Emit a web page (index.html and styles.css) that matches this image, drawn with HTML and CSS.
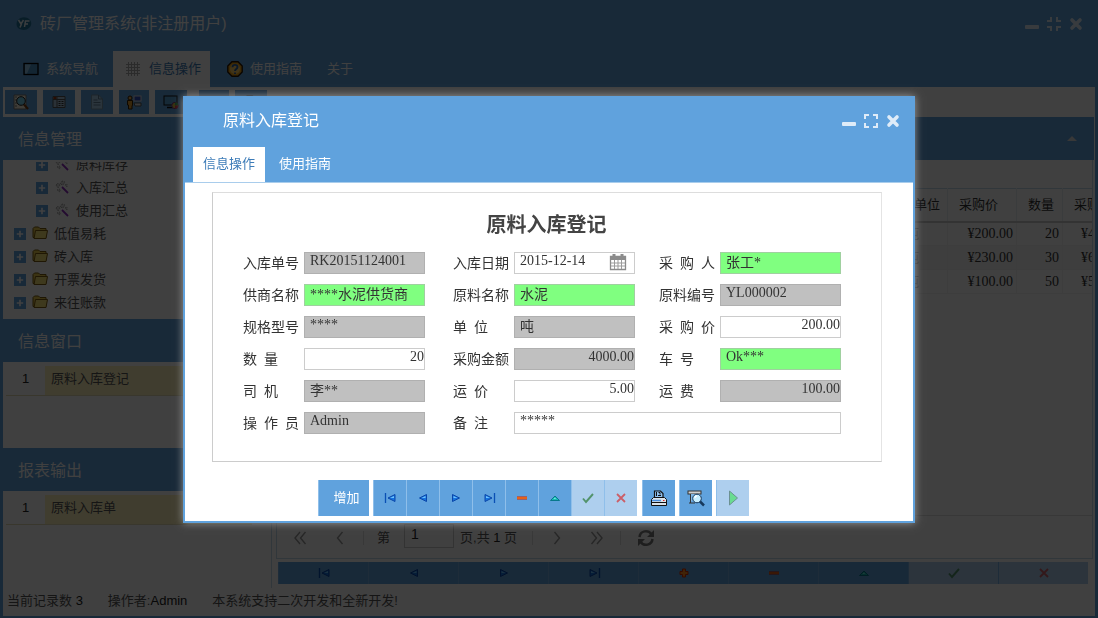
FILE: index.html
```html
<!DOCTYPE html>
<html lang="zh-CN">
<head>
    <meta charset="UTF-8">
    <title>砖厂管理系统</title>
    <meta name="viewport" content="width=device-width,initial-scale=1">
    <link rel="stylesheet" href="styles.css">
</head>
<body>

<svg class="defs" width="0" height="0">
    <symbol id="i-min" viewBox="0 0 16 16"><rect x="1" y="9" width="14" height="4" rx="1" fill="currentColor"/></symbol>
    <symbol id="i-max" viewBox="0 0 16 16"><path d="M1 6V1h5v2H3v3zM10 1h5v5h-2V3h-3zM1 10h2v3h3v2H1zM13 10h2v5h-5v-2h3z" fill="currentColor"/></symbol>
    <symbol id="i-restore" viewBox="0 0 16 16"><path d="M4 1h2v5H1V4h3zM10 1h2v3h3v2h-5zM1 10h5v5H4v-3H1zM10 10h5v2h-3v3h-2z" fill="currentColor"/></symbol>
    <symbol id="i-close" viewBox="0 0 16 16"><path d="M4 4l8 8M12 4l-8 8" stroke="currentColor" stroke-width="3.600" stroke-linecap="round"/></symbol>
    <symbol id="i-first" viewBox="0 0 16 16"><path d="M3.500 3v10" stroke="#0a50b4" stroke-width="1.300"/><path d="M13 4.500v7L6 8z" fill="#1673e0" stroke="#0a46a8"/><path d="M12 6L8 8h4z" fill="#6cc3ff"/></symbol>
    <symbol id="i-prev" viewBox="0 0 16 16"><path d="M11.500 4.500v7L4.500 8z" fill="#1673e0" stroke="#0a46a8"/><path d="M10.500 6l-4 2h4z" fill="#6cc3ff"/></symbol>
    <symbol id="i-next" viewBox="0 0 16 16"><path d="M4.500 4.500v7L11.500 8z" fill="#1673e0" stroke="#0a46a8"/><path d="M5.500 6l4 2h-4z" fill="#6cc3ff"/></symbol>
    <symbol id="i-last" viewBox="0 0 16 16"><path d="M13.500 3v10" stroke="#0a50b4" stroke-width="1.300"/><path d="M4 4.500v7L11 8z" fill="#1673e0" stroke="#0a46a8"/><path d="M5 6l4 2H5z" fill="#6cc3ff"/></symbol>
    <symbol id="i-plus" viewBox="0 0 16 16"><path d="M6.500 4h3v2.500H12v3H9.500V12h-3V9.500H4v-3h2.500z" fill="#ff8a1e" stroke="#d02c00"/></symbol>
    <symbol id="i-minus" viewBox="0 0 16 16"><rect x="3" y="6.500" width="10" height="3" fill="#cc2200"/><rect x="3" y="7.500" width="10" height="1" fill="#ffa030"/></symbol>
    <symbol id="i-up" viewBox="0 0 16 16"><path d="M3.500 10.500L8 6l4.500 4.500z" fill="#19b9b4" stroke="#08788c"/><path d="M6.500 9L8 7.500 9 9z" fill="#7df0e4"/></symbol>
    <symbol id="i-ok" viewBox="0 0 16 16"><path d="M3 8.500l3 3.500 7-8" fill="none" stroke="#2c7a35" stroke-width="1.900"/></symbol>
    <symbol id="i-no" viewBox="0 0 16 16"><path d="M4 4l8 8M12 4l-8 8" stroke="#d83030" stroke-width="1.800"/></symbol>
    <symbol id="i-print" viewBox="0 0 18 18"><path d="M4.500 9V2h6L13 4.500V9" fill="#8fc0ee" stroke="#111" stroke-width="1.200"/><path d="M6.500 3v4M8.500 3.500H10v2M11 6.500H8" stroke="#111" fill="none"/><path d="M1.500 10.500l2-2h11l2 2v6h-15z" fill="#dbe3ea" stroke="#111"/><path d="M2 13.500h14" stroke="#111"/><path d="M2 11.500h9" stroke="#4a90e0" stroke-width="1.500"/><path d="M13 11.500h1.500" stroke="#e02020"/></symbol>
    <symbol id="i-preview" viewBox="0 0 18 18"><rect x="1" y="2" width="13" height="3" fill="#cfcfcf" stroke="#333"/><path d="M3.500 5v9M2 14h6" stroke="#333" fill="none"/><rect x="4" y="5" width="9" height="7" fill="#7fb6e6"/><circle cx="10" cy="9.500" r="4.300" fill="#c8eeff" stroke="#16385c"/><path d="M13 12.500l4 4" stroke="#16385c" stroke-width="2.500"/><path d="M8 9c0-2 1-2 2-2" stroke="#fff" fill="none" stroke-width="1.300"/></symbol>
    <symbol id="i-play" viewBox="0 0 16 16"><path d="M4.500 1v14l8-7z" fill="#4de26a" stroke="#50776a"/></symbol>
    <symbol id="i-cal" viewBox="0 0 18 18"><path d="M1.500 3.500h15v13h-15z" fill="#fff" stroke="#8b8b8b" stroke-width="1.300"/><path d="M1 3h16v4H1zM3.500 1h3v3h-3zM11.500 1h3v3h-3z" fill="#8b8b8b"/><path d="M5.500 7v9M9 7v9M12.500 7v9M2 10h14M2 13h14" stroke="#9b9b9b"/></symbol>
    <symbol id="i-screen" viewBox="0 0 16 16"><rect x="1" y="2.500" width="14" height="11" fill="#4d92c8" stroke="#000" stroke-width="1.300"/><path d="M2 3.500h6L4 12.500H2z" fill="#93c8ea"/></symbol>
    <symbol id="i-grid" viewBox="0 0 16 16"><path d="M3.500 1v14M6.500 1v14M9.500 1v14M12.500 1v14M1 3.500h14M1 6.500h14M1 9.500h14M1 12.500h14" stroke="#aaa"/></symbol>
    <symbol id="i-help" viewBox="0 0 16 16"><path d="M5 .800h6L15.200 5v6L11 15.200H5L.800 11V5z" fill="#f0a417" stroke="#2a1600" stroke-width="1.400"/><circle cx="8" cy="8" r="5" fill="#ffd064"/><path d="M5.500 6.300c0-3.300 5-3 5-.300C10.500 8 8 7.800 8 10M8 11.500v1.500" fill="none" stroke="#2b61a0" stroke-width="1.900"/></symbol>
    <symbol id="i-search" viewBox="0 0 16 16"><path d="M1 1h12v14H1z" fill="#f5efdc" stroke="#777"/><path d="M2 3h2M2 6h2M2 9h2M2 12h2" stroke="#777"/><circle cx="8" cy="7" r="4.300" fill="#79d1ee" stroke="#222"/><path d="M11 10.500l4 4.500" stroke="#7a3c10" stroke-width="2.200"/></symbol>
    <symbol id="i-list" viewBox="0 0 16 16"><path d="M2 2.500h12v11H2z" fill="#a9c4dc" stroke="#555"/><path d="M2.500 4h3" stroke="#a33510" stroke-width="2"/><path d="M6 2v12M2 5.500h12" stroke="#555"/><path d="M7.500 7.500h5M7.500 9.500h5M7.500 11.500h5" stroke="#333" stroke-dasharray="2 1"/></symbol>
    <symbol id="i-doc" viewBox="0 0 16 16"><path d="M2.500 1h7l4 4v10h-11z" fill="#a9cdea" stroke="#7896aa"/><path d="M9.500 1v4h4M4.500 6h4M4.500 8.500h7M4.500 11h7" fill="none" stroke="#5f8099"/></symbol>
    <symbol id="i-user" viewBox="0 0 16 16"><rect x="8" y="2" width="7" height="5" fill="#304fc0" stroke="#ddd"/><path d="M8 9h7v3H9z" fill="#ddd" stroke="#555"/><circle cx="4" cy="4" r="2" fill="#e2ac55" stroke="#3b2000"/><path d="M1.500 6.500h5v5H6V15H2.500v-4h-1z" fill="#e09a30" stroke="#3b2000"/></symbol>
    <symbol id="i-monitor" viewBox="0 0 16 16"><rect x="1" y="2" width="13" height="9" fill="#5aa3d8" stroke="#111"/><path d="M4 13.500h6" stroke="#111" stroke-width="1.500"/><circle cx="12" cy="11.500" r="3.200" fill="#d6c13c" stroke="#7d2e85"/><path d="M12 11.500V8.300a3.200 3.200 0 0 1 3.200 3.200z" fill="#3eaa4c"/><path d="M12 11.500h3.200a3.200 3.200 0 0 1-3.200 3.200z" fill="#cf3348"/></symbol>
    <symbol id="i-folder" viewBox="0 0 16 16"><path d="M1 11.500V2.500L2.500 1h4L8 2.500h6v9z" fill="#ebc94c" stroke="#7b5c10"/><path d="M3.500 4.500h12l-1.500 8H2z" fill="#f8e174" stroke="#7b5c10"/></symbol>
    <symbol id="i-expand" viewBox="0 0 13 13"><path d="M0 0h13v13H0z" fill="#60a2dd"/><path d="M6.500 3v7M3 6.500h7" stroke="#fff" stroke-width="1.800"/></symbol>
    <symbol id="i-wand" viewBox="0 0 16 16"><path d="M8 7l6 6" stroke="#8d2ebd" stroke-width="1.800"/><path d="M2 5l2-2 2 2-2 3zM8 1l3 1-2 3-3-1zM3 10l3-1v3zM11 5l2-1v3z" fill="#ddd" stroke="#999" stroke-dasharray="1 1"/></symbol>
    <symbol id="i-refresh" viewBox="0 0 18 18"><path d="M2.500 8a6.500 6.500 0 0 1 11.800-3M15.500 10a6.500 6.500 0 0 1-11.800 3" fill="none" stroke="#777" stroke-width="2.500"/><path d="M17 1v7h-7zM1 17v-7h7z" fill="#777"/></symbol>
    <symbol id="i-left" viewBox="0 0 16 16"><path d="M10.500 2l-5 6 5 6" fill="none" stroke="#999" stroke-width="1.400"/></symbol>
    <symbol id="i-left2" viewBox="0 0 16 16"><path d="M8 2L3 8l5 6M13.500 2l-5 6 5 6" fill="none" stroke="#999" stroke-width="1.400"/></symbol>
    <symbol id="i-right" viewBox="0 0 16 16"><path d="M5.500 2l5 6-5 6" fill="none" stroke="#999" stroke-width="1.400"/></symbol>
    <symbol id="i-right2" viewBox="0 0 16 16"><path d="M2.500 2l5 6-5 6M8 2l5 6-5 6" fill="none" stroke="#999" stroke-width="1.400"/></symbol>
    <symbol id="i-logo" viewBox="0 0 16 16"><path d="M2 4c3-4 9-3 11-1 3 2 3 7 0 9-3 3-9 2-11 0C0 10 0 6 2 4z" fill="#22759c"/><path d="M2.500 4L5 8l2.500-4M5.500 8L4 11.500M13.500 5H9.500L8.500 11M9 8h3" fill="none" stroke="#e8f2f8" stroke-width="1.500"/></symbol>
</svg>

<div class="window">
    <div class="win_head">
        <div class="win_title">
            <svg class="ico"><use href="#i-logo"/></svg>
            <span>砖厂管理系统(非注册用户)</span>
            <div class="win_tools">
                <button type="button" aria-label="最小化"><svg class="ico"><use href="#i-min"/></svg></button>
                <button type="button" aria-label="还原"><svg class="ico"><use href="#i-restore"/></svg></button>
                <button type="button" aria-label="关闭"><svg class="ico"><use href="#i-close"/></svg></button>
            </div>
        </div>
        <div class="main_tabs">
            <button type="button"><svg class="ico"><use href="#i-screen"/></svg>系统导航</button>
            <button type="button" class="active"><svg class="ico"><use href="#i-grid"/></svg>信息操作</button>
            <button type="button"><svg class="ico"><use href="#i-help"/></svg>使用指南</button>
            <button type="button">关于</button>
        </div>
    </div>

    <div class="toolbar">
        <button type="button" aria-label="查询"><svg class="ico"><use href="#i-search"/></svg></button>
        <button type="button" aria-label="列表"><svg class="ico"><use href="#i-list"/></svg></button>
        <button type="button" aria-label="单据"><svg class="ico"><use href="#i-doc"/></svg></button>
        <button type="button" class="narrow" aria-label="用户"><svg class="ico"><use href="#i-user"/></svg></button>
        <button type="button" aria-label="图表"><svg class="ico"><use href="#i-monitor"/></svg></button>
        <button type="button" class="narrow split" aria-label="更多"></button>
        <button type="button" aria-label="打印"><svg class="ico"><use href="#i-print"/></svg></button>
    </div>

    <div class="main">
        <div class="side">
            <div class="panel panel_tree">
                <h2 class="panel_head">信息管理</h2>
                <ul class="tree">
                    <li class="sub"><svg class="exp"><use href="#i-expand"/></svg><svg class="ico"><use href="#i-wand"/></svg>原料库存</li>
                    <li class="sub"><svg class="exp"><use href="#i-expand"/></svg><svg class="ico"><use href="#i-wand"/></svg>入库汇总</li>
                    <li class="sub"><svg class="exp"><use href="#i-expand"/></svg><svg class="ico"><use href="#i-wand"/></svg>使用汇总</li>
                    <li><svg class="exp"><use href="#i-expand"/></svg><svg class="ico"><use href="#i-folder"/></svg>低值易耗</li>
                    <li><svg class="exp"><use href="#i-expand"/></svg><svg class="ico"><use href="#i-folder"/></svg>砖入库</li>
                    <li><svg class="exp"><use href="#i-expand"/></svg><svg class="ico"><use href="#i-folder"/></svg>开票发货</li>
                    <li><svg class="exp"><use href="#i-expand"/></svg><svg class="ico"><use href="#i-folder"/></svg>来往账款</li>
                </ul>
            </div>
            <div class="panel panel_info">
                <h2 class="panel_head">信息窗口</h2>
                <div class="row"><span class="no">1</span><span class="name">原料入库登记</span></div>
            </div>
            <div class="panel">
                <h2 class="panel_head">报表输出</h2>
                <div class="row"><span class="no">1</span><span class="name">原料入库单</span></div>
            </div>
        </div>

        <div class="content">
            <div class="content_head"><i class="caret"></i></div>
            <div class="grid">
                <table>
                    <colgroup><col class="c_rest"><col class="c_unit"><col class="c_price"><col class="c_num"><col class="c_sum"></colgroup>
                    <thead>
                        <tr><th></th><th>单位</th><th>采购价</th><th>数量</th><th>采购金额</th></tr>
                    </thead>
                    <tbody>
                        <tr><td></td><td class="unit">吨</td><td>¥200.00</td><td>20</td><td class="sum">¥4000.00</td></tr>
                        <tr><td></td><td class="unit">吨</td><td>¥230.00</td><td>30</td><td class="sum">¥6900.00</td></tr>
                        <tr><td></td><td class="unit">吨</td><td>¥100.00</td><td>50</td><td class="sum">¥5000.00</td></tr>
                    </tbody>
                </table>
            </div>
            <div class="pager">
                <button type="button" aria-label="首页"><svg class="ico"><use href="#i-left2"/></svg></button>
                <button type="button" aria-label="上页"><svg class="ico"><use href="#i-left"/></svg></button>
                <i class="sep"></i>
                <label for="page">第</label>
                <input id="page" type="text" value="1">
                <span>页,共 <b>1</b> 页</span>
                <i class="sep"></i>
                <button type="button" aria-label="下页"><svg class="ico"><use href="#i-right"/></svg></button>
                <button type="button" aria-label="末页"><svg class="ico"><use href="#i-right2"/></svg></button>
                <i class="sep"></i>
                <button type="button" aria-label="刷新"><svg class="ico big"><use href="#i-refresh"/></svg></button>
            </div>
            <div class="navbar">
                <button type="button" aria-label="第一条"><svg class="ico"><use href="#i-first"/></svg></button>
                <button type="button" aria-label="上一条"><svg class="ico"><use href="#i-prev"/></svg></button>
                <button type="button" aria-label="下一条"><svg class="ico"><use href="#i-next"/></svg></button>
                <button type="button" aria-label="最后一条"><svg class="ico"><use href="#i-last"/></svg></button>
                <button type="button" aria-label="添加"><svg class="ico"><use href="#i-plus"/></svg></button>
                <button type="button" aria-label="删除"><svg class="ico"><use href="#i-minus"/></svg></button>
                <button type="button" aria-label="编辑"><svg class="ico"><use href="#i-up"/></svg></button>
                <button type="button" aria-label="保存" disabled><svg class="ico"><use href="#i-ok"/></svg></button>
                <button type="button" aria-label="取消" disabled><svg class="ico"><use href="#i-no"/></svg></button>
            </div>
        </div>
    </div>

    <div class="status">
        <span>当前记录数 <b>3</b></span>
        <span>操作者:<b>Admin</b></span>
        <span>本系统支持二次开发和全新开发!</span>
    </div>
</div>

<div class="mask">
    <div class="dialog" role="dialog" aria-labelledby="dlg_title">
        <div class="dlg_head">
            <div class="dlg_title">
                <span id="dlg_title">原料入库登记</span>
                <div class="win_tools">
                    <button type="button" aria-label="最小化"><svg class="ico"><use href="#i-min"/></svg></button>
                    <button type="button" aria-label="最大化"><svg class="ico"><use href="#i-max"/></svg></button>
                    <button type="button" aria-label="关闭"><svg class="ico"><use href="#i-close"/></svg></button>
                </div>
            </div>
            <div class="dlg_tabs">
                <button type="button" class="active">信息操作</button>
                <button type="button">使用指南</button>
            </div>
        </div>
        <div class="dlg_body">
            <form class="sheet">
                <h1>原料入库登记</h1>
                <div class="fields">
                    <div class="field"><label for="f1">入库单号</label><input id="f1" class="gray" type="text" value="RK20151124001" readonly></div>
                    <div class="field date"><label for="f2">入库日期</label><input id="f2" type="text" value="2015-12-14"><svg class="cal"><use href="#i-cal"/></svg></div>
                    <div class="field"><label for="f3">采&ensp;购&ensp;人</label><input id="f3" class="green" type="text" value="张工*"></div>

                    <div class="field"><label for="f4">供商名称</label><input id="f4" class="green" type="text" value="****水泥供货商"></div>
                    <div class="field"><label for="f5">原料名称</label><input id="f5" class="green" type="text" value="水泥"></div>
                    <div class="field"><label for="f6">原料编号</label><input id="f6" class="gray" type="text" value="YL000002" readonly></div>

                    <div class="field"><label for="f7">规格型号</label><input id="f7" class="gray" type="text" value="****" readonly></div>
                    <div class="field"><label for="f8">单&ensp;位</label><input id="f8" class="gray" type="text" value="吨" readonly></div>
                    <div class="field"><label for="f9">采&ensp;购&ensp;价</label><input id="f9" class="num" type="text" value="200.00"></div>

                    <div class="field"><label for="f10">数&ensp;量</label><input id="f10" class="num" type="text" value="20"></div>
                    <div class="field"><label for="f11">采购金额</label><input id="f11" class="num gray" type="text" value="4000.00" readonly></div>
                    <div class="field"><label for="f12">车&ensp;号</label><input id="f12" class="green" type="text" value="Ok***"></div>

                    <div class="field"><label for="f13">司&ensp;机</label><input id="f13" class="gray" type="text" value="李**" readonly></div>
                    <div class="field"><label for="f14">运&ensp;价</label><input id="f14" class="num" type="text" value="5.00"></div>
                    <div class="field"><label for="f15">运&ensp;费</label><input id="f15" class="num gray" type="text" value="100.00" readonly></div>

                    <div class="field"><label for="f16">操&ensp;作&ensp;员</label><input id="f16" class="gray" type="text" value="Admin" readonly></div>
                    <div class="field wide"><label for="f17">备&ensp;注</label><input id="f17" type="text" value="*****"></div>
                </div>
            </form>
            <div class="actions">
                <button type="button" class="add">增加</button>
                <div class="group">
                    <button type="button" aria-label="第一条"><svg class="ico"><use href="#i-first"/></svg></button>
                    <button type="button" aria-label="上一条"><svg class="ico"><use href="#i-prev"/></svg></button>
                    <button type="button" aria-label="下一条"><svg class="ico"><use href="#i-next"/></svg></button>
                    <button type="button" aria-label="最后一条"><svg class="ico"><use href="#i-last"/></svg></button>
                    <button type="button" aria-label="删除"><svg class="ico"><use href="#i-minus"/></svg></button>
                    <button type="button" aria-label="编辑"><svg class="ico"><use href="#i-up"/></svg></button>
                    <button type="button" aria-label="保存" disabled><svg class="ico"><use href="#i-ok"/></svg></button>
                    <button type="button" aria-label="取消" disabled><svg class="ico"><use href="#i-no"/></svg></button>
                </div>
                <button type="button" aria-label="打印"><svg class="ico big"><use href="#i-print"/></svg></button>
                <button type="button" aria-label="预览"><svg class="ico big"><use href="#i-preview"/></svg></button>
                <button type="button" aria-label="执行" disabled><svg class="ico"><use href="#i-play"/></svg></button>
            </div>
        </div>
    </div>
</div>

</body>
</html>
```
FILE: styles.css
```css
*{
    box-sizing:border-box;
}
body{
    margin:0;
    font:13px/20px "Liberation Sans","Noto Sans CJK SC",sans-serif;
    color:#555;
    background:#fff;
}
button{
    margin:0;
    padding:0;
    border:0;
    background:none;
    font:inherit;
    color:inherit;
    display:flex;
    align-items:center;
    justify-content:center;
}
h1,h2,ul{
    margin:0;
    padding:0;
    list-style:none;
}
b{
    font-weight:normal;
    color:#222;
}
.defs{
    position:absolute;
}
.ico{
    width:16px;
    height:16px;
    flex:none;
}
.ico.big{
    width:18px;
    height:18px;
}

/* main window */
.window{
    height:100vh;
    display:flex;
    flex-direction:column;
    border:3px solid #60a2dd;
    border-top:0;
    border-bottom-width:2px;
    overflow:hidden;
}
.win_head{
    background:#60a2dd;
    color:#fff;
    height:87px;
    flex:none;
    display:flex;
    flex-direction:column;
    justify-content:space-between;
}
.win_title{
    display:flex;
    align-items:center;
    height:48px;
    padding:0 11px 0 13px;
    gap:8px;
    font-size:16px;
}
.win_tools{
    display:flex;
    gap:6px;
    margin-left:auto;
    opacity:.8;
}
.main_tabs{
    display:flex;
    height:36px;
    padding-left:10px;
}
.main_tabs button{
    padding:0 8px 0 10px;
    gap:7px;
}
.main_tabs button+button{
    margin-left:7px;
}
.main_tabs .active{
    background:#fff;
    color:#3d7cb8;
    padding:0 9px 0 12px;
    gap:8px;
}
.toolbar{
    display:flex;
    gap:6px;
    height:30px;
    flex:none;
    padding:3px 2px;
}
.toolbar button{
    width:32px;
    height:24px;
    background:#60a2dd;
}
.toolbar .narrow{
    width:30px;
}
.toolbar .split{
    margin-left:6px;
}
.main{
    flex:1;
    min-height:0;
    display:flex;
    gap:4px;
}
.side{
    width:269px;
    flex:none;
    border-right:1px solid #c3d9ec;
}
.panel_head,.content_head{
    height:43px;
    background:#60a2dd;
    color:#fff;
    font-size:16px;
    font-weight:normal;
    line-height:46px;
    padding-left:15px;
}
.panel_tree{
    height:202px;
}
.panel_info{
    height:129px;
}
/* list is scrolled, the first line is half hidden */
.tree{
    height:157px;
    margin-top:2px;
    padding-bottom:5px;
    overflow:hidden;
    display:flex;
    flex-direction:column;
    justify-content:flex-end;
}
.tree li{
    display:flex;
    flex:none;
    align-items:center;
    gap:6px;
    height:23px;
    padding-left:11px;
}
.tree .sub{
    padding-left:33px;
}
.exp{
    width:12px;
    height:12px;
    flex:none;
}
.row{
    display:flex;
    margin:4px 19px 0 3px;
    height:30px;
    line-height:26px;
    border-bottom:1px solid #e4dcb4;
}
.row .no{
    width:39px;
    text-align:center;
    color:#222;
}
.row .name{
    flex:1;
    background:#fff3bd;
    padding-left:6px;
}
.content{
    flex:1;
    min-width:0;
    display:flex;
    flex-direction:column;
}
.content_head{
    display:flex;
    align-items:center;
    justify-content:flex-end;
    padding-right:17px;
    margin-right:1px;
}
.caret{
    border:5px solid transparent;
    border-top:0;
    border-bottom-color:#ddd;
}
.grid{
    flex:1;
    margin-right:2px;
    padding-top:28px;
    overflow:hidden;
    border:1px solid #c3d9ec;
    border-width:0 1px;
}
table{
    width:864px;
    table-layout:fixed;
    border-collapse:collapse;
    color:#333;
}
.c_unit{width:45px}
.c_price{width:69px}
.c_num{width:46px}
.c_sum{width:78px}
th{
    height:33px;
    padding:0 0 0 11px;
    font-weight:normal;
    text-align:left;
    white-space:nowrap;
    border:1px solid #e8eef4;
    border-top-color:#c3d9ec;
    border-bottom:2px solid #ccc;
}
td{
    height:24px;
    padding:0 3px 0 0;
    text-align:right;
    font:14px/20px "Liberation Serif","Noto Sans CJK SC",serif;
    border:1px solid #f2f2f2;
}
.unit{
    text-align:left;
    padding-left:2px;
    color:#999;
}
.sum{
    text-align:left;
    padding-left:18px;
}
tbody tr:nth-child(2){
    background:#f5f5f5;
}
.pager{
    display:flex;
    align-items:center;
    height:44px;
    margin-right:2px;
    padding:2px 0 0 15px;
    border:1px solid #c3d9ec;
    border-top-color:#ddd;
}
.pager button+button{
    margin-left:24px;
}
.pager .sep{
    width:1px;
    height:14px;
    background:#ddd;
    margin:0 13px 0 15px;
}
.pager .sep+button{
    margin-left:3px;
}
.pager input{
    width:50px;
    height:24px;
    margin:0 6px 4px 14px;
    padding:0 6px 5px;
    border:1px solid #ccc;
    border-radius:0;
    font:14px/18px "Liberation Sans",sans-serif;
    color:#222;
}
.navbar{
    display:flex;
    margin:3px 7px 4px 2px;
    height:22px;
}
.navbar button{
    flex:1;
    background:#60a2dd;
    border-left:1px solid #78b0e2;
}
.status{
    display:flex;
    gap:25px;
    flex:none;
    height:28px;
    line-height:26px;
    padding-left:4px;
}

/* dialog */
.mask{
    position:fixed;
    top:0;
    right:0;
    bottom:0;
    left:0;
    background:rgba(0,0,0,.75);
    display:flex;
    align-items:center;
    justify-content:center;
}
.dialog{
    width:732px;
    background:#fff;
    border:2px solid #60a2dd;
    box-shadow:0 0 8px #999;
}
.dlg_head{
    background:#60a2dd;
    color:#fff;
    border-bottom:1px solid #a9cdec;
}
.dlg_title{
    display:flex;
    align-items:center;
    height:49px;
    padding:0 12px 2px 38px;
    font-size:16px;
}
.dlg_tabs{
    display:flex;
    padding-left:8px;
}
.dlg_tabs button{
    height:35px;
    padding:0 10px;
}
.dlg_tabs button+button{
    margin-left:4px;
}
.dlg_tabs .active{
    background:#fff;
    color:#3d7cb8;
}
.dlg_body{
    padding:9px 31px 5px 27px;
}
.sheet{
    height:270px;
    border:1px solid #ccc;
    border-top-color:#ddd;
    border-right-color:#e4e4e4;
    padding:18px 0 0 30px;
    font:14px/22px "Liberation Serif","Noto Sans CJK SC",serif;
}
.sheet h1{
    font-size:20px;
    line-height:28px;
    font-weight:bold;
    color:#444;
    text-align:center;
    margin:0 31px 13px 0;
}
.fields{
    display:grid;
    grid-template-columns:210px 206px 182px;
    row-gap:10px;
}
.field{
    display:flex;
    width:182px;
    height:22px;
    position:relative;
    color:#333;
}
.field label{
    width:61px;
    flex:none;
    line-height:24px;
}
.field input{
    flex:1;
    min-width:0;
    height:22px;
    padding:0 5px 3px;
    border:1px solid #ccc;
    border-radius:0;
    background:#fff;
    font:inherit;
    line-height:18px;
    color:#333;
}
.field .gray{
    background:#c0c0c0;
    border-color:#b0b0b0;
}
.field .green{
    background:#80ff80;
    border-color:#a0d0a0;
}
.field .num{
    text-align:right;
    padding-right:0;
}
.field.wide{
    grid-column:span 2;
    width:auto;
}
.cal{
    position:absolute;
    right:8px;
    top:1px;
    width:18px;
    height:18px;
}
.actions{
    display:flex;
    gap:4px;
    margin:18px 0 0 106px;
}
.actions button{
    width:33px;
    height:36px;
    background:#60a2dd;
    border-left:1px solid #8fbfea;
}
.actions .add{
    width:51px;
    padding-left:5px;
    color:#fff;
}
.actions .group{
    display:flex;
    margin-right:1px;
}
.navbar button:disabled,.actions button:disabled{
    background:#aecfee;
}
button:disabled .ico{
    opacity:.7;
}
```
